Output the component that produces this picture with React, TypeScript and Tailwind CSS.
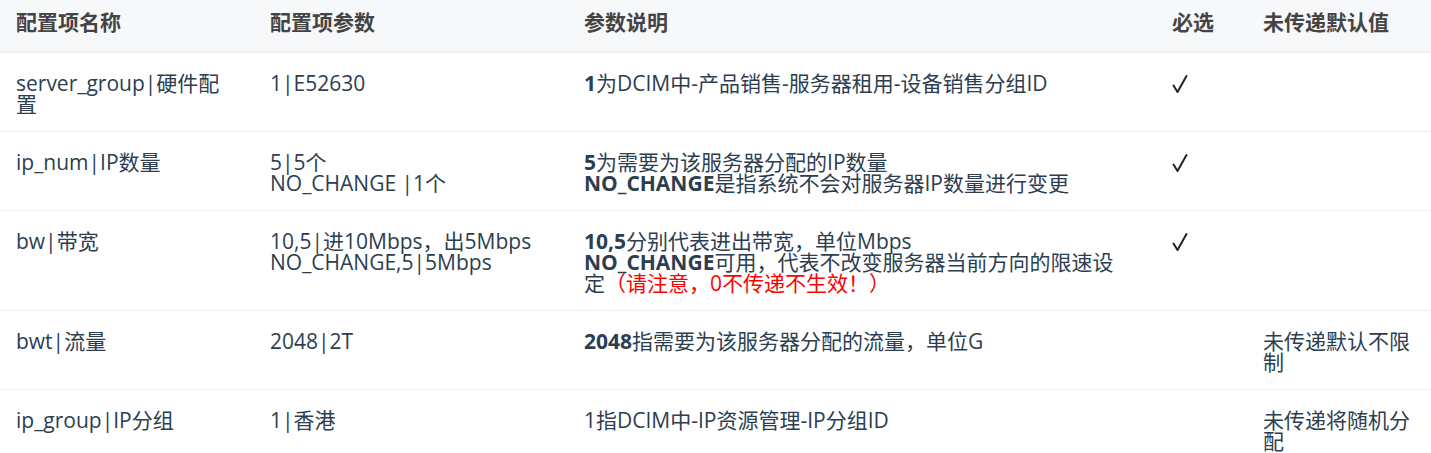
import React from 'react';

type Row = {
  name: string;
  param: React.ReactNode;
  desc: React.ReactNode;
  required: boolean;
  fallback?: string;
};

const rows: Row[] = [
  {
    name: 'server_group|硬件配置',
    param: '1|E52630',
    desc: (
      <>
        <b>1</b>为DCIM中-产品销售-服务器租用-设备销售分组ID
      </>
    ),
    required: true,
  },
  {
    name: 'ip_num|IP数量',
    param: (
      <>
        5|5个
        <br />
        NO_CHANGE |1个
      </>
    ),
    desc: (
      <>
        <b>5</b>为需要为该服务器分配的IP数量
        <br />
        <b>NO_CHANGE</b>是指系统不会对服务器IP数量进行变更
      </>
    ),
    required: true,
  },
  {
    name: 'bw|带宽',
    param: (
      <>
        10,5|进10Mbps，出5Mbps
        <br />
        NO_CHANGE,5|5Mbps
      </>
    ),
    desc: (
      <>
        <b>10,5</b>分别代表进出带宽，单位Mbps
        <br />
        <b>NO_CHANGE</b>可用，代表不改变服务器当前方向的限速设定
        <span className="text-[#ff0000]">（请注意，0不传递不生效！）</span>
      </>
    ),
    required: true,
  },
  {
    name: 'bwt|流量',
    param: '2048|2T',
    desc: (
      <>
        <b>2048</b>指需要为该服务器分配的流量，单位G
      </>
    ),
    required: false,
    fallback: '未传递默认不限制',
  },
  {
    name: 'ip_group|IP分组',
    param: '1|香港',
    desc: '1指DCIM中-IP资源管理-IP分组ID',
    required: false,
    fallback: '未传递将随机分配',
  },
];

const headers = ['配置项名称', '配置项参数', '参数说明', '必选', '未传递默认值'];
const widths = ['w-[254px]', 'w-[314px]', 'w-[588px]', 'w-[91px]', 'w-[184px]'];

const cell = 'pl-4 pr-4 pt-[20px] pb-[16px] align-top text-[21px] leading-[21px]';

function Check() {
  return (
    <svg width="16" height="20" viewBox="0 0 16 20" className="mt-[1px] block">
      <path
        d="M1.5 11.5 L5.5 18 L14.5 2"
        fill="none"
        stroke="#1f2328"
        strokeWidth="2"
        strokeLinecap="round"
        strokeLinejoin="round"
      />
    </svg>
  );
}

export default function App() {
  return (
    <div
      className="w-[1431px] bg-white text-[#2c3e50]"
      style={{ fontFamily: '"Open Sans", "Noto Sans CJK SC", sans-serif' }}
    >
      <table className="w-full table-fixed border-collapse">
        <colgroup>
          {widths.map((w, i) => (
            <col key={i} className={w} />
          ))}
        </colgroup>
        <thead>
          <tr className="h-[52px] bg-[#f7f8fa] border-b-2 border-[#eef0f4]">
            {headers.map((h) => (
              <th key={h} className="px-4 pb-[6px] text-left align-middle text-[21px] font-bold text-[#444]">
                {h}
              </th>
            ))}
          </tr>
        </thead>
        <tbody>
          {rows.map((r) => (
            <tr key={r.name} className="border-b border-[#eeeeee]">
              <td className={cell}>{r.name}</td>
              <td className={cell}>{r.param}</td>
              <td className={`${cell} pr-[28px]`}>{r.desc}</td>
              <td className={cell}>{r.required && <Check />}</td>
              <td className={cell}>{r.fallback}</td>
            </tr>
          ))}
        </tbody>
      </table>
    </div>
  );
}
